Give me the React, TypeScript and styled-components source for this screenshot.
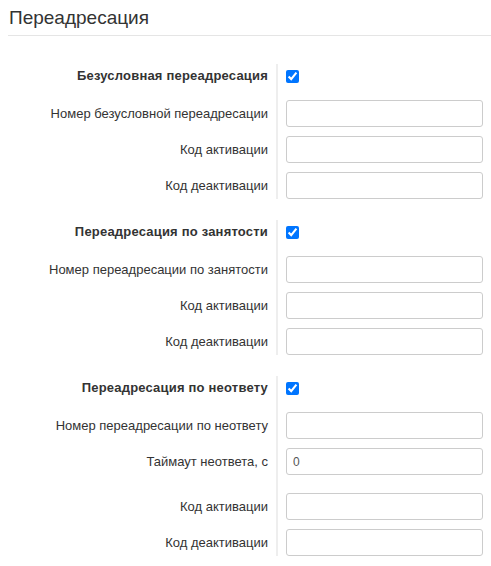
import styled, { createGlobalStyle } from "styled-components";

type Field = {
  label: string;
  value?: string;
  extraGap?: boolean;
};

type Section = {
  title: string;
  fields: Field[];
};

const sections: Section[] = [
  {
    title: "Безусловная переадресация",
    fields: [
      { label: "Номер безусловной переадресации" },
      { label: "Код активации" },
      { label: "Код деактивации" },
    ],
  },
  {
    title: "Переадресация по занятости",
    fields: [
      { label: "Номер переадресации по занятости" },
      { label: "Код активации" },
      { label: "Код деактивации" },
    ],
  },
  {
    title: "Переадресация по неответу",
    fields: [
      { label: "Номер переадресации по неответу" },
      { label: "Таймаут неответа, с", value: "0", extraGap: true },
      { label: "Код активации" },
      { label: "Код деактивации" },
    ],
  },
];

export default function App() {
  return (
    <>
      <GlobalStyle />
      <Page>
        <Heading>Переадресация</Heading>
        <Form>
          {sections.map((section) => (
            <Group key={section.title}>
              <Separator $rows={section.fields.length + 1} />
              <GroupTitle>{section.title}</GroupTitle>
              <CheckCell>
                <Checkbox type="checkbox" defaultChecked />
              </CheckCell>
              {section.fields.map((field, i) => (
                <FieldRow key={i}>
                  <Label>{field.label}</Label>
                  <Input
                    type="text"
                    defaultValue={field.value ?? ""}
                    $extraGap={field.extraGap}
                  />
                </FieldRow>
              ))}
            </Group>
          ))}
        </Form>
      </Page>
    </>
  );
}

const GlobalStyle = createGlobalStyle`
  body {
    margin: 0;
    background: #fff;
    font-family: "Liberation Sans", Arial, sans-serif;
    color: #333;
  }
`;

const Page = styled.div`
  padding-left: 8px;
`;

const Heading = styled.h3`
  margin: 0;
  padding: 8px 0 7px 1px;
  font-size: 19px;
  font-weight: 400;
  line-height: 20px;
  color: #333;
  border-bottom: 1px solid #e5e5e5;
`;

const Form = styled.div`
  padding: 28px 8px 0 0;
  display: flex;
  flex-direction: column;
  gap: 21px;
`;

const Group = styled.div`
  display: grid;
  grid-template-columns: 260px 2px 1fr;
  column-gap: 8px;
  row-gap: 9px;
  align-items: start;
`;

const Separator = styled.div<{ $rows: number }>`
  grid-column: 2;
  grid-row: 1 / span ${(p) => p.$rows};
  align-self: stretch;
  background: #eee;
`;

const FieldRow = styled.div`
  display: contents;
`;

const GroupTitle = styled.div`
  grid-column: 1;
  grid-row: 1;
  height: 24px;
  margin-bottom: 3px;
  line-height: 24px;
  text-align: right;
  font-size: 13px;
  font-weight: 700;
  letter-spacing: 0.2px;
`;

const CheckCell = styled.div`
  grid-column: 3;
  grid-row: 1;
  height: 24px;
  display: flex;
  align-items: center;
`;

const Checkbox = styled.input`
  margin: 0;
  width: 13px;
  height: 13px;
`;

const Label = styled.div`
  grid-column: 1;
  line-height: 27px;
  text-align: right;
  font-size: 13px;
`;

const Input = styled.input<{ $extraGap?: boolean }>`
  grid-column: 3;
  box-sizing: border-box;
  width: 100%;
  height: 27px;
  margin: 0 0 ${(p) => (p.$extraGap ? "9px" : "0")};
  padding: 0 6px;
  border: 1px solid #ccc;
  border-radius: 3px;
  font-family: "Liberation Sans", Arial, sans-serif;
  font-size: 12px;
  color: #555;
  outline: none;
`;
